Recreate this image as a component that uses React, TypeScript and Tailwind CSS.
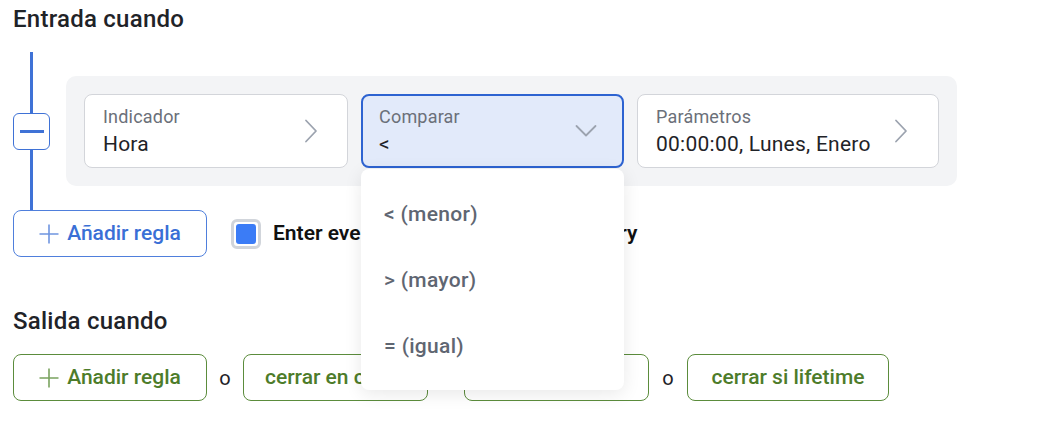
import React from "react";

function ChevronRight() {
  return (
    <svg width="14" height="24" viewBox="0 0 14 24" fill="none" className="shrink-0">
      <path d="M2 1.5 L12 12 L2 22.5" stroke="#9ca3af" strokeWidth="1.8" strokeLinecap="round" strokeLinejoin="round" />
    </svg>
  );
}

function ChevronDown() {
  return (
    <svg width="22" height="14" viewBox="0 0 22 14" fill="none" className="shrink-0">
      <path d="M1.5 2 L11 11.5 L20.5 2" stroke="#9ca3af" strokeWidth="1.8" strokeLinecap="round" strokeLinejoin="round" />
    </svg>
  );
}

function Plus({ color }: { color: string }) {
  return (
    <svg width="20" height="20" viewBox="0 0 20 20" fill="none" className="shrink-0">
      <path d="M10 0.5 V19.5 M0.5 10 H19.5" stroke={color} strokeWidth="1.6" />
    </svg>
  );
}

export default function App() {
  return (
    <div className="w-[1056px] h-[428px] bg-white font-[Roboto,sans-serif] pl-[13px] overflow-hidden">
      <div className="pt-[3px] text-[24px] leading-[32px] font-medium tracking-[0.25px] text-[#1f2328]">Entrada cuando</div>

      <div className="mt-[17px] flex">
        <div className="w-[37px] flex flex-col items-center">
          <div className="flex-1 w-[3px] bg-[#3f72d6]" />
          <div className="w-[37px] h-[37px] rounded-[6px] border border-[#3f72d6] bg-white flex items-center justify-center">
            <div className="w-[24px] h-[3px] bg-[#3f72d6]" />
          </div>
          <div className="flex-1 w-[3px] bg-[#3f72d6]" />
        </div>

        <div className="ml-[16px] my-[24px] bg-[#f3f4f6] rounded-[10px] p-[18px] flex gap-[13px]">
          <div className="w-[264px] h-[74px] bg-white border border-[#d3d5da] rounded-[8px] flex items-center justify-between pl-[18px] pr-[29px]">
            <div className="flex flex-col">
              <span className="text-[18px] leading-[24px] tracking-[0.2px] text-[#6b7079]">Indicador</span>
              <span className="mt-[1px] text-[21px] leading-[28px] tracking-[0.2px] text-[#1f2328]">Hora</span>
            </div>
            <ChevronRight />
          </div>

          <div className="relative w-[263px] h-[74px] bg-[#e2eafa] border-2 border-[#2d63d1] rounded-[8px] flex items-center justify-between pl-[16px] pr-[25px]">
            <div className="flex flex-col">
              <span className="text-[18px] leading-[24px] tracking-[0.2px] text-[#6b7079]">Comparar</span>
              <span className="mt-[1px] text-[21px] leading-[28px] text-[#1f2328]">&lt;</span>
            </div>
            <ChevronDown />
            <div className="absolute z-10 left-[-2px] right-[-2px] top-[73px] bg-white rounded-[8px] shadow-[0_4px_18px_rgba(0,0,0,0.09)] pt-[13px] pb-[10px]">
              {["< (menor)", "> (mayor)", "= (igual)"].map((t) => (
                <div key={t} className="h-[66px] flex items-center pl-[23px] text-[21px] font-medium tracking-[0.3px] text-[#5f6672]">
                  {t}
                </div>
              ))}
            </div>
          </div>

          <div className="w-[302px] h-[74px] bg-white border border-[#d3d5da] rounded-[8px] flex items-center justify-between pl-[18px] pr-[30px]">
            <div className="flex flex-col">
              <span className="text-[18px] leading-[24px] tracking-[0.2px] text-[#6b7079]">Parámetros</span>
              <span className="mt-[1px] text-[21px] leading-[28px] tracking-[0.25px] text-[#1f2328]">00:00:00, Lunes, Enero</span>
            </div>
            <ChevronRight />
          </div>
        </div>
      </div>

      <div className="flex items-center">
        <div className="w-[194px] h-[47px] rounded-[8px] border border-[#4f7fdc] flex items-center justify-center gap-[8px] text-[21px] font-medium text-[#3a6fd6]">
          <Plus color="#6f95e0" />
          <span>Añadir regla</span>
        </div>
        <div className="ml-[24px] w-[30px] h-[30px] border-[3px] border-[#d1d5db] rounded-[6px] p-[2px] bg-white">
          <div className="w-full h-full bg-[#3b7cf6] rounded-[3px]" />
        </div>
        <span className="ml-[12px] text-[21px] font-semibold text-[#111111]">Enter every new candle during an entry</span>
      </div>

      <div className="mt-[48px] text-[24px] leading-[32px] font-medium tracking-[0.25px] text-[#1f2328]">Salida cuando</div>

      <div className="mt-[17px] flex items-center gap-[12px]">
        <div className="w-[194px] h-[47px] rounded-[8px] border border-[#5b8c3c] flex items-center justify-center gap-[8px] text-[21px] font-medium text-[#4d7c2a]">
          <Plus color="#7aa35f" />
          <span>Añadir regla</span>
        </div>
        <span className="w-[12px] text-center text-[20px] text-[#1f2328]">o</span>
        <div className="w-[185px] h-[47px] rounded-[8px] border border-[#5b8c3c] flex items-center justify-center text-[21px] font-medium text-[#4d7c2a]">
          cerrar en cruce
        </div>
        <span className="w-[12px] text-center text-[20px] text-[#1f2328]">o</span>
        <div className="w-[185px] h-[47px] rounded-[8px] border border-[#5b8c3c] flex items-center justify-center text-[21px] font-medium text-[#4d7c2a]">
          cerrar si profit
        </div>
        <span className="w-[14px] text-center text-[20px] text-[#1f2328]">o</span>
        <div className="w-[202px] h-[47px] rounded-[8px] border border-[#5b8c3c] flex items-center justify-center text-[21px] font-medium text-[#4d7c2a]">
          cerrar si lifetime
        </div>
      </div>
    </div>
  );
}
